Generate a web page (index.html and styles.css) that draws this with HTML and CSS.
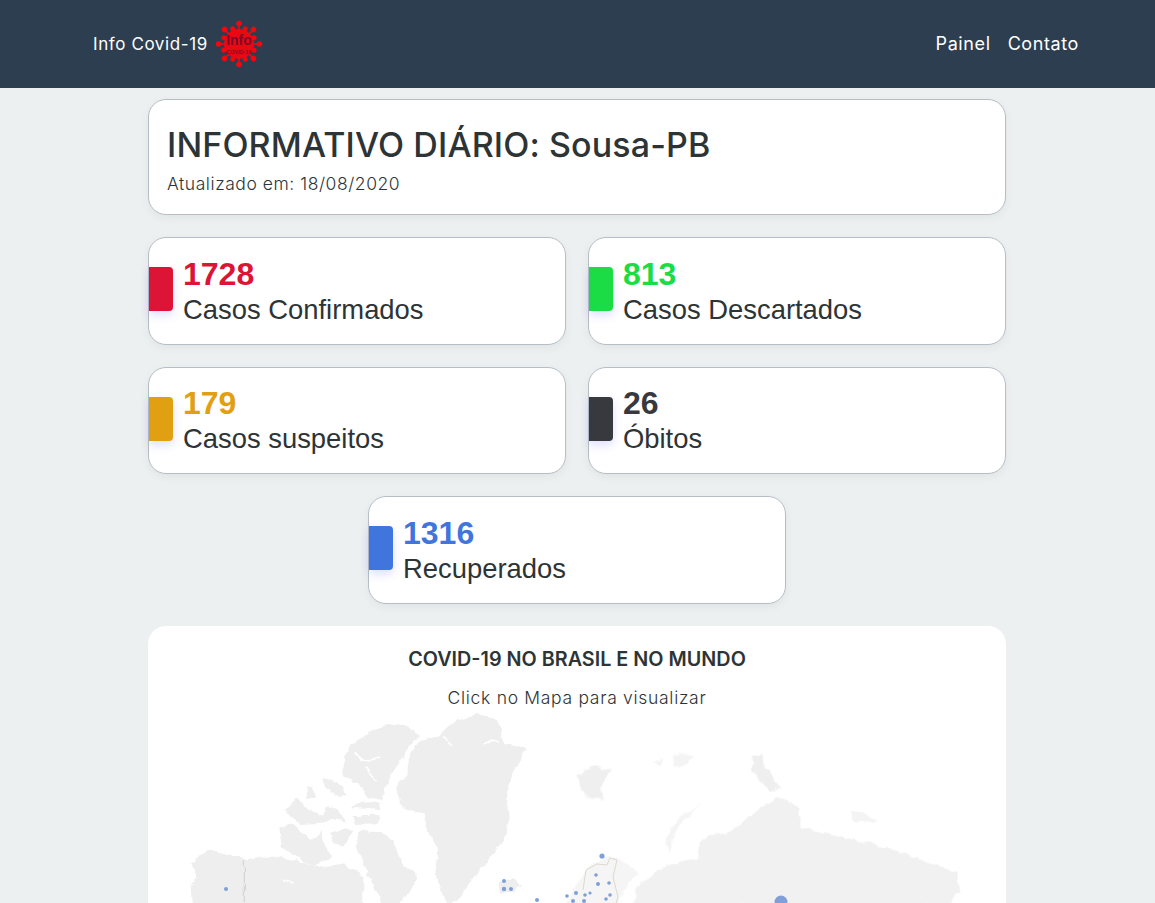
FILE: index.html
```html
<!DOCTYPE html>
<html>
	<head>
		<meta charset="UTF-8">
		<title>Info Covid-19</title>
		<link rel="stylesheet" href="styles.css">
	</head>
	<body>
		<nav class="navbar">
			<a class="brand" href="#">
				Info Covid-19
				<svg class="logo" width="50" height="50" viewBox="-25 -25 50 50">
					<defs>
						<g id="spike">
							<line x1="0" y1="-12" x2="0" y2="-21" stroke="#ee0a14" stroke-width="1.6"/>
							<circle cx="0" cy="-20.5" r="2.8" fill="#f5060f"/>
						</g>
						<g id="spikeIn">
							<line x1="0" y1="-10" x2="0" y2="-16" stroke="#ee0a14" stroke-width="1.4"/>
							<circle cx="0" cy="-16.5" r="2.4" fill="#f5060f"/>
						</g>
					</defs>
					<circle r="15" fill="#e60a14"/>
					<use href="#spike"/>
					<use href="#spike" transform="rotate(45)"/>
					<use href="#spike" transform="rotate(90)"/>
					<use href="#spike" transform="rotate(135)"/>
					<use href="#spike" transform="rotate(180)"/>
					<use href="#spike" transform="rotate(225)"/>
					<use href="#spike" transform="rotate(270)"/>
					<use href="#spike" transform="rotate(315)"/>
					<use href="#spikeIn" transform="rotate(22.5)"/>
					<use href="#spikeIn" transform="rotate(67.5)"/>
					<use href="#spikeIn" transform="rotate(112.5)"/>
					<use href="#spikeIn" transform="rotate(157.5)"/>
					<use href="#spikeIn" transform="rotate(202.5)"/>
					<use href="#spikeIn" transform="rotate(247.5)"/>
					<use href="#spikeIn" transform="rotate(292.5)"/>
					<use href="#spikeIn" transform="rotate(337.5)"/>
					<text class="logo-big" x="0" y="1" text-anchor="middle">Info</text>
					<text class="logo-small" x="0" y="10" text-anchor="middle">COVID-19</text>
				</svg>
			</a>
			<div class="nav-links">
				<a href="#">Painel</a>
				<a href="#">Contato</a>
			</div>
		</nav>

		<main class="container">
			<section class="card header-card">
				<h1>INFORMATIVO DIÁRIO: Sousa-PB</h1>
				<p>Atualizado em: 18/08/2020</p>
			</section>

			<section class="stats">
				<div class="card stat stat-red">
					<span class="bar"></span>
					<div class="stat-text">
						<div class="num">1728</div>
						<div class="label">Casos Confirmados</div>
					</div>
				</div>
				<div class="card stat stat-green">
					<span class="bar"></span>
					<div class="stat-text">
						<div class="num">813</div>
						<div class="label">Casos Descartados</div>
					</div>
				</div>
				<div class="card stat stat-yellow">
					<span class="bar"></span>
					<div class="stat-text">
						<div class="num">179</div>
						<div class="label">Casos suspeitos</div>
					</div>
				</div>
				<div class="card stat stat-dark">
					<span class="bar"></span>
					<div class="stat-text">
						<div class="num">26</div>
						<div class="label">Óbitos</div>
					</div>
				</div>
				<div class="card stat stat-blue stat-center">
					<span class="bar"></span>
					<div class="stat-text">
						<div class="num">1316</div>
						<div class="label">Recuperados</div>
					</div>
				</div>
			</section>

			<section class="map-card">
				<h2>COVID-19 NO BRASIL E NO MUNDO</h2>
				<p>Click no Mapa para visualizar</p>
				<svg class="map" width="858" height="193" viewBox="148 710 858 193">
					<defs>
						<filter id="coast" x="148" y="710" width="858" height="193" filterUnits="userSpaceOnUse" primitiveUnits="userSpaceOnUse">
							<feTurbulence type="fractalNoise" baseFrequency="0.09" numOctaves="3" seed="4" result="n"/>
							<feDisplacementMap in="SourceGraphic" in2="n" scale="7" xChannelSelector="R" yChannelSelector="G"/>
							<feGaussianBlur stdDeviation="0.5"/>
						</filter>
					</defs>
					<g filter="url(#coast)">
						<!-- lado esquerdo: america do norte e groenlandia -->
						<g transform="translate(150 700) scale(0.3333)" fill="#eeeeee">
							<path d="M900 70 L945 55 L980 40 L1035 60 L1055 90 L1060 130 L1100 135 L1128 148 L1100 190 L1085 230 L1070 290 L1080 350 L1060 420 L1030 460 L1000 500 L960 550 L930 590 L905 615 L880 590 L860 540 L855 500 L865 450 L840 400 L820 340 L760 325 L735 265 L770 225 L770 180 L810 120 L860 110 Z"/>
							<path d="M610 130 L660 95 L710 72 L780 80 L805 105 L770 150 L740 200 L715 240 L695 300 L650 290 L625 250 L580 230 L582 170 Z"/>
							<path d="M520 235 L545 240 L580 265 L590 290 L560 285 L525 265 Z"/>
							<path d="M470 262 L490 260 L495 290 L470 295 Z"/>
							<path d="M405 330 L440 295 L470 325 L515 345 L540 320 L580 350 L590 368 L545 360 L515 368 L450 372 L420 345 Z"/>
							<path d="M600 325 L640 305 L695 310 L690 330 L630 325 Z"/>
							<path d="M605 345 L685 345 L685 370 L615 372 Z"/>
							<path d="M388 385 L430 375 L480 418 L515 392 L525 440 L545 470 L490 495 L440 470 L395 440 Z"/>
							<path d="M540 395 L560 395 L590 385 L610 392 L580 440 L550 430 Z"/>
							<path d="M625 395 L690 395 L725 425 L760 490 L800 530 L780 580 L750 609 L700 615 L660 540 L620 440 Z"/>
							<path d="M125 490 L150 465 L180 448 L285 478 L330 470 L380 470 L440 482 L520 500 L580 490 L640 530 L640 615 L125 615 L122 550 L135 530 Z"/>
							<path d="M645 490 L670 475 L680 530 L650 530 Z"/>
							<path d="M1045 545 L1095 535 L1115 555 L1090 575 L1050 578 Z"/>
							<g fill="none" stroke="#fff" stroke-width="5">
								<path d="M615 160 Q640 195 685 175"/>
								<path d="M650 200 L675 245"/>
								<path d="M1000 130 L1050 122"/>
								<path d="M880 105 L905 135"/>
								<path d="M400 535 L430 550"/>
							</g>
							<line x1="283" y1="478" x2="283" y2="615" stroke="#cfcfcf" stroke-width="3"/>
						</g>
						<!-- lado direito: europa e russia -->
						<g transform="translate(570 700) scale(0.3333)" fill="#efefef">
							<path d="M20 225 L70 195 L120 205 L90 260 L100 295 L60 300 L30 260 Z"/>
							<path d="M245 182 L280 175 L270 195 Z M305 165 L370 165 L350 195 L310 200 Z" fill="#f4f4f4"/>
							<path d="M550 170 L575 160 L585 205 L610 235 L632 265 L605 272 L570 245 L545 210 Z"/>
							<path d="M395 312 L350 340 L310 375 L285 430 L300 460 L315 400 L345 360 Z" fill="#f4f4f4"/>
							<path d="M840 335 L880 335 L925 360 L890 365 L850 368 Z" fill="#f4f4f4"/>
							<path d="M200 560 L280 500 L385 475 L390 420 L420 405 L470 400 L510 370 L570 330 L620 288 L685 320 L695 385 L760 400 L860 420 L970 450 L1060 480 L1165 520 L1170 570 L1130 615 L190 615 Z" fill="#f1f1f1"/>
							<path d="M-10 615 L15 560 L45 510 L80 485 L120 470 L150 480 L210 520 L170 550 L150 600 L150 615 Z" fill="#f5f5f5"/>
						</g>
					</g>
					<path d="M583 890 L586 870 L597 864 L607 865 L610 858 L617 860 L613 877 L618 897 L616 903" fill="none" stroke="#ddd8cd" stroke-width="1"/>
					<g fill="#7f9fd8">
						<circle cx="226" cy="889" r="2"/>
						<circle cx="504" cy="881" r="2"/>
						<circle cx="504" cy="889" r="2.2"/>
						<circle cx="511" cy="889" r="2"/>
						<circle cx="537" cy="900" r="2"/>
						<circle cx="567" cy="896" r="1.8"/>
						<circle cx="576" cy="893" r="2"/>
						<circle cx="573" cy="901" r="2"/>
						<circle cx="585" cy="895" r="1.8"/>
						<circle cx="590" cy="893" r="1.6"/>
						<circle cx="598" cy="884" r="2"/>
						<circle cx="602" cy="856" r="2.6"/>
						<circle cx="596" cy="875" r="1.8"/>
						<circle cx="609" cy="883" r="1.8"/>
						<circle cx="610" cy="895" r="1.8"/>
						<circle cx="606" cy="899" r="1.8"/>
						<circle cx="584" cy="901" r="2"/>
						<circle cx="781" cy="902" r="6.5"/>
					</g>
				</svg>
			</section>
		</main>
	</body>
</html>
```

FILE: styles.css
```css
*{
	box-sizing: border-box;
	margin: 0;
	padding: 0;
}
html, body{
	height: 100%;
	overflow: hidden;
}
body{
	background-color: #ecf0f1;
	color: #2d3436;
	font-family: "Inter", "Noto Sans", sans-serif;
}
a{
	color: #fff;
	text-decoration: none;
}

/*barra de cima*/
.navbar{
	height: 88px;
	background-color: #2c3e50;
	display: flex;
	align-items: center;
	justify-content: space-between;
	padding: 0 76px 0 93px;
	font-size: 17px;
	letter-spacing: 0.6px;
}
.brand{
	display: flex;
	align-items: center;
	gap: 6px;
}
.logo{
	letter-spacing: 0;
}
.logo-big{
	font-family: "Liberation Sans", sans-serif;
	font-size: 14px;
	font-weight: bold;
	fill: #7d0a26;
}
.logo-small{
	font-family: "Liberation Sans", sans-serif;
	font-size: 5.5px;
	font-weight: bold;
	fill: #8a0a22;
}
.nav-links{
	display: flex;
	gap: 17px;
	font-size: 18px;
	line-height: 22px;
	margin-bottom: 1px;
}

.container{
	width: 858px;
	margin: 0 0 0 148px;
	padding-top: 11px;
}
.card{
	background-color: #fff;
	border: 1px solid #b5bec6;
	border-radius: 18px;
	box-shadow: 0 3px 10px rgba(0, 0, 0, 0.05);
}
.header-card{
	height: 116px;
	padding: 22px 18px 0;
}
.header-card h1{
	font-size: 34px;
	font-weight: 500;
	line-height: 46px;
	letter-spacing: 0.13px;
}
.header-card p{
	font-size: 17.5px;
	line-height: 24px;
	margin-top: 4px;
	font-weight: 300;
	letter-spacing: 0.55px;
}

/*cartoes de numeros*/
.stats{
	display: grid;
	grid-template-columns: 418px 418px;
	grid-template-rows: 108px 107px 108px;
	gap: 22px;
	margin-top: 22px;
}
.stat{
	display: flex;
	align-items: center;
	gap: 10px;
	font-family: "Liberation Sans", sans-serif;
}
.stat-center{
	grid-column: 1 / 3;
	justify-self: center;
	width: 418px;
}
.stat-text{
	padding-bottom: 2px;
}
.bar{
	width: 24px;
	height: 44px;
	margin-bottom: 4px;
	border-radius: 0 4px 4px 0;
	box-shadow: 0 4px 10px rgba(70, 70, 255, 0.18);
}
.num{
	font-size: 32px;
	font-weight: bold;
	line-height: 38px;
}
.label{
	font-size: 27.4px;
	line-height: 33px;
}
.stat-red .bar{ background-color: #dc1435; }
.stat-red .num{ color: #dc1435; }
.stat-green .bar{ background-color: #1cdc45; }
.stat-green .num{ color: #1cdc45; }
.stat-yellow .bar{ background-color: #e0a012; }
.stat-yellow .num{ color: #e0a012; }
.stat-dark .bar{ background-color: #38383f; }
.stat-dark .num{ color: #38383f; }
.stat-blue .bar{ background-color: #3f75dd; }
.stat-blue .num{ color: #3f75dd; }

/*mapa*/
.map-card{
	margin-top: 22px;
	height: 600px;
	background-color: #fff;
	border-radius: 18px;
	text-align: center;
	padding-top: 20px;
}
.map-card h2{
	font-size: 19.8px;
	font-weight: 600;
	line-height: 26px;
}
.map-card p{
	font-size: 17.5px;
	line-height: 24px;
	margin-top: 14px;
	font-weight: 300;
	letter-spacing: 0.7px;
}
.map{
	display: block;
}
```
